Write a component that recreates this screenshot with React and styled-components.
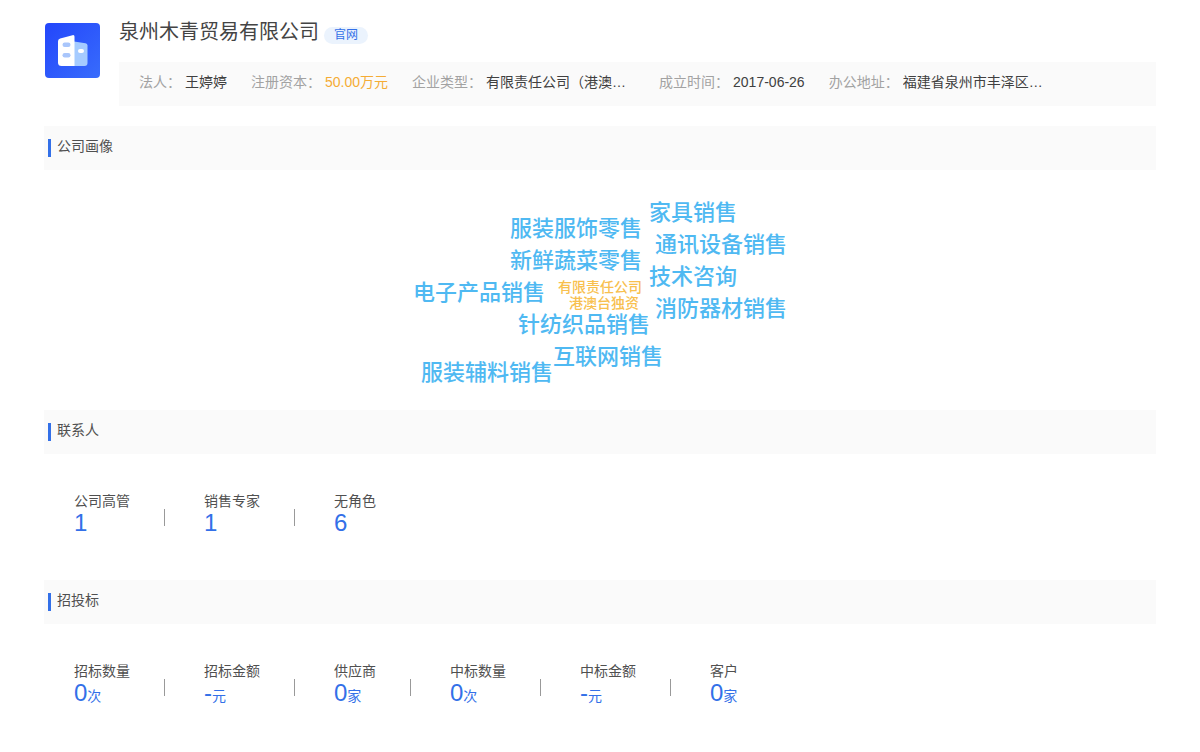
import React from "react";
import styled, { createGlobalStyle } from "styled-components";

const GlobalStyle = createGlobalStyle`
  * { box-sizing: border-box; }
  body {
    margin: 0;
    background: #fff;
    color: #505050;
    font-family: "Liberation Sans", "Noto Sans CJK SC", sans-serif;
    font-size: 14px;
    line-height: 20px;
  }
  h1, h2, dl, dd { margin: 0; font-weight: 400; }
`;

const Page = styled.main`
  padding: 20px 44px 24px;
`;

const Header = styled.header`
  display: flex;
  gap: 19px;
  padding-left: 1px;
  margin-bottom: 20px;
`;

const Logo = styled.svg`
  flex: none;
  width: 55px;
  height: 55px;
  margin-top: 3px;
`;

const HeaderBody = styled.div`
  flex: 1;
  min-width: 0;
`;

const TitleRow = styled.div`
  display: flex;
  align-items: flex-end;
  gap: 5px;
  height: 24px;
  margin-bottom: 18px;
`;

const CompanyName = styled.h1`
  font-size: 20px;
  line-height: 24px;
  color: #444;
`;

const SiteTag = styled.a`
  padding: 0 10px;
  border-radius: 9px;
  background: #ebf3fd;
  color: #3370e8;
  font-size: 12px;
  line-height: 17px;
  text-decoration: none;
`;

const InfoBar = styled.dl`
  display: flex;
  flex-wrap: wrap;
  column-gap: 24px;
  padding: 10px 20px 14px;
  background: #fafafa;
`;

const InfoItem = styled.div`
  display: flex;
  gap: 4px;
`;

const InfoLabel = styled.dt`
  color: #a2a2a2;
`;

const InfoValue = styled.dd`
  width: ${(p) => (p.$clip ? "149px" : "auto")};
  overflow: hidden;
  white-space: nowrap;
  text-overflow: ellipsis;
  color: ${(p) => (p.$accent ? "#f5ac35" : "#404040")};
`;

const SectionHead = styled.div`
  display: flex;
  gap: 6px;
  height: 44px;
  padding: 10px 4px;
  background: #fafafa;

  &::before {
    content: "";
    width: 3px;
    height: 18px;
    margin-top: 3px;
    background: #3370e8;
  }
`;

const SectionTitle = styled.h2`
  font-size: 14px;
  line-height: 20px;
`;

const Cloud = styled.div`
  position: relative;
  height: 240px;
`;

const Word = styled.span`
  position: absolute;
  left: calc(50% + ${(p) => p.$x}px);
  top: ${(p) => p.$y}px;
  white-space: nowrap;
  font-size: ${(p) => (p.$small ? 14 : 22)}px;
  line-height: ${(p) => (p.$small ? 16 : 32)}px;
  font-weight: 500;
  color: ${(p) => (p.$small ? "#f8c04e" : "#4fb9f2")};
`;

const Stats = styled.dl`
  display: flex;
  flex-wrap: wrap;
  padding: 36px 30px 40px;
`;

const Stat = styled.div`
  display: flex;
  align-items: center;
  height: 50px;

  &:not(:last-child)::after {
    content: "";
    width: 1px;
    height: 17px;
    margin: 4px 39px 0 34px;
    background: #999;
  }
`;

const StatLabel = styled.dt`
  line-height: 20px;
`;

const StatValue = styled.dd`
  line-height: 24px;
  height: 28px;
  color: #3370e8;
`;

const Figure = styled.span`
  font-size: 24px;
`;

const info = [
  { label: "法人：", value: "王婷婷" },
  { label: "注册资本：", value: "50.00万元", accent: true },
  { label: "企业类型：", value: "有限责任公司（港澳…", clip: true },
  { label: "成立时间：", value: "2017-06-26" },
  { label: "办公地址：", value: "福建省泉州市丰泽区…", clip: true },
];

const words = [
  { text: "家具销售", x: 49, y: 27 },
  { text: "服装服饰零售", x: -90, y: 43 },
  { text: "通讯设备销售", x: 55, y: 59 },
  { text: "新鲜蔬菜零售", x: -90, y: 75 },
  { text: "技术咨询", x: 49, y: 91 },
  { text: "电子产品销售", x: -187, y: 107 },
  { text: "有限责任公司", x: -42, y: 109, small: true },
  { text: "港澳台独资", x: -31, y: 125, small: true },
  { text: "消防器材销售", x: 55, y: 123 },
  { text: "针纺织品销售", x: -82, y: 139 },
  { text: "互联网销售", x: -47, y: 171 },
  { text: "服装辅料销售", x: -179, y: 187 },
];

const contacts = [
  { label: "公司高管", value: "1" },
  { label: "销售专家", value: "1" },
  { label: "无角色", value: "6" },
];

const bids = [
  { label: "招标数量", value: "0", unit: "次" },
  { label: "招标金额", value: "-", unit: "元" },
  { label: "供应商", value: "0", unit: "家" },
  { label: "中标数量", value: "0", unit: "次" },
  { label: "中标金额", value: "-", unit: "元" },
  { label: "客户", value: "0", unit: "家" },
];

function CompanyLogo() {
  return (
    <Logo viewBox="0 0 55 55" aria-hidden="true">
      <defs>
        <linearGradient id="logoBg" x1="0" y1="0" x2="1" y2="1">
          <stop offset="0" stopColor="#2346fb" />
          <stop offset="1" stopColor="#386cfc" />
        </linearGradient>
      </defs>
      <rect width="55" height="55" rx="4" fill="url(#logoBg)" />
      <path d="M29 18.5 L40.5 20.2 Q42.5 20.5 42.5 22.5 V40 Q42.5 43 39.5 43 H29 Z" fill="#a5cbff" />
      <path d="M15.2 15.4 L27.5 12.2 Q29.5 11.7 29.5 13.7 V43 H16.5 Q13 43 13 39.5 V18.2 Q13 16 15.2 15.4 Z" fill="#fff" />
      <rect x="17.5" y="19.5" width="8" height="4.5" rx="2.2" fill="#a9c6fb" />
      <rect x="17.5" y="30" width="8" height="4.5" rx="2.2" fill="#a9c6fb" />
      <rect x="33" y="26" width="6" height="4" rx="2" fill="#fff" />
    </Logo>
  );
}

function Section({ title, children }) {
  return (
    <section>
      <SectionHead>
        <SectionTitle>{title}</SectionTitle>
      </SectionHead>
      {children}
    </section>
  );
}

function StatList({ items }) {
  return (
    <Stats>
      {items.map((s) => (
        <Stat key={s.label}>
          <div>
            <StatLabel>{s.label}</StatLabel>
            <StatValue>
              <Figure>{s.value}</Figure>
              {s.unit}
            </StatValue>
          </div>
        </Stat>
      ))}
    </Stats>
  );
}

export default function App() {
  return (
    <Page>
      <GlobalStyle />
      <Header>
        <CompanyLogo />
        <HeaderBody>
          <TitleRow>
            <CompanyName>泉州木青贸易有限公司</CompanyName>
            <SiteTag href="#">官网</SiteTag>
          </TitleRow>
          <InfoBar>
            {info.map((i) => (
              <InfoItem key={i.label}>
                <InfoLabel>{i.label}</InfoLabel>
                <InfoValue $accent={i.accent} $clip={i.clip}>
                  {i.value}
                </InfoValue>
              </InfoItem>
            ))}
          </InfoBar>
        </HeaderBody>
      </Header>
      <Section title="公司画像">
        <Cloud>
          {words.map((w) => (
            <Word key={w.text} $x={w.x} $y={w.y} $small={w.small}>
              {w.text}
            </Word>
          ))}
        </Cloud>
      </Section>
      <Section title="联系人">
        <StatList items={contacts} />
      </Section>
      <Section title="招投标">
        <StatList items={bids} />
      </Section>
    </Page>
  );
}
